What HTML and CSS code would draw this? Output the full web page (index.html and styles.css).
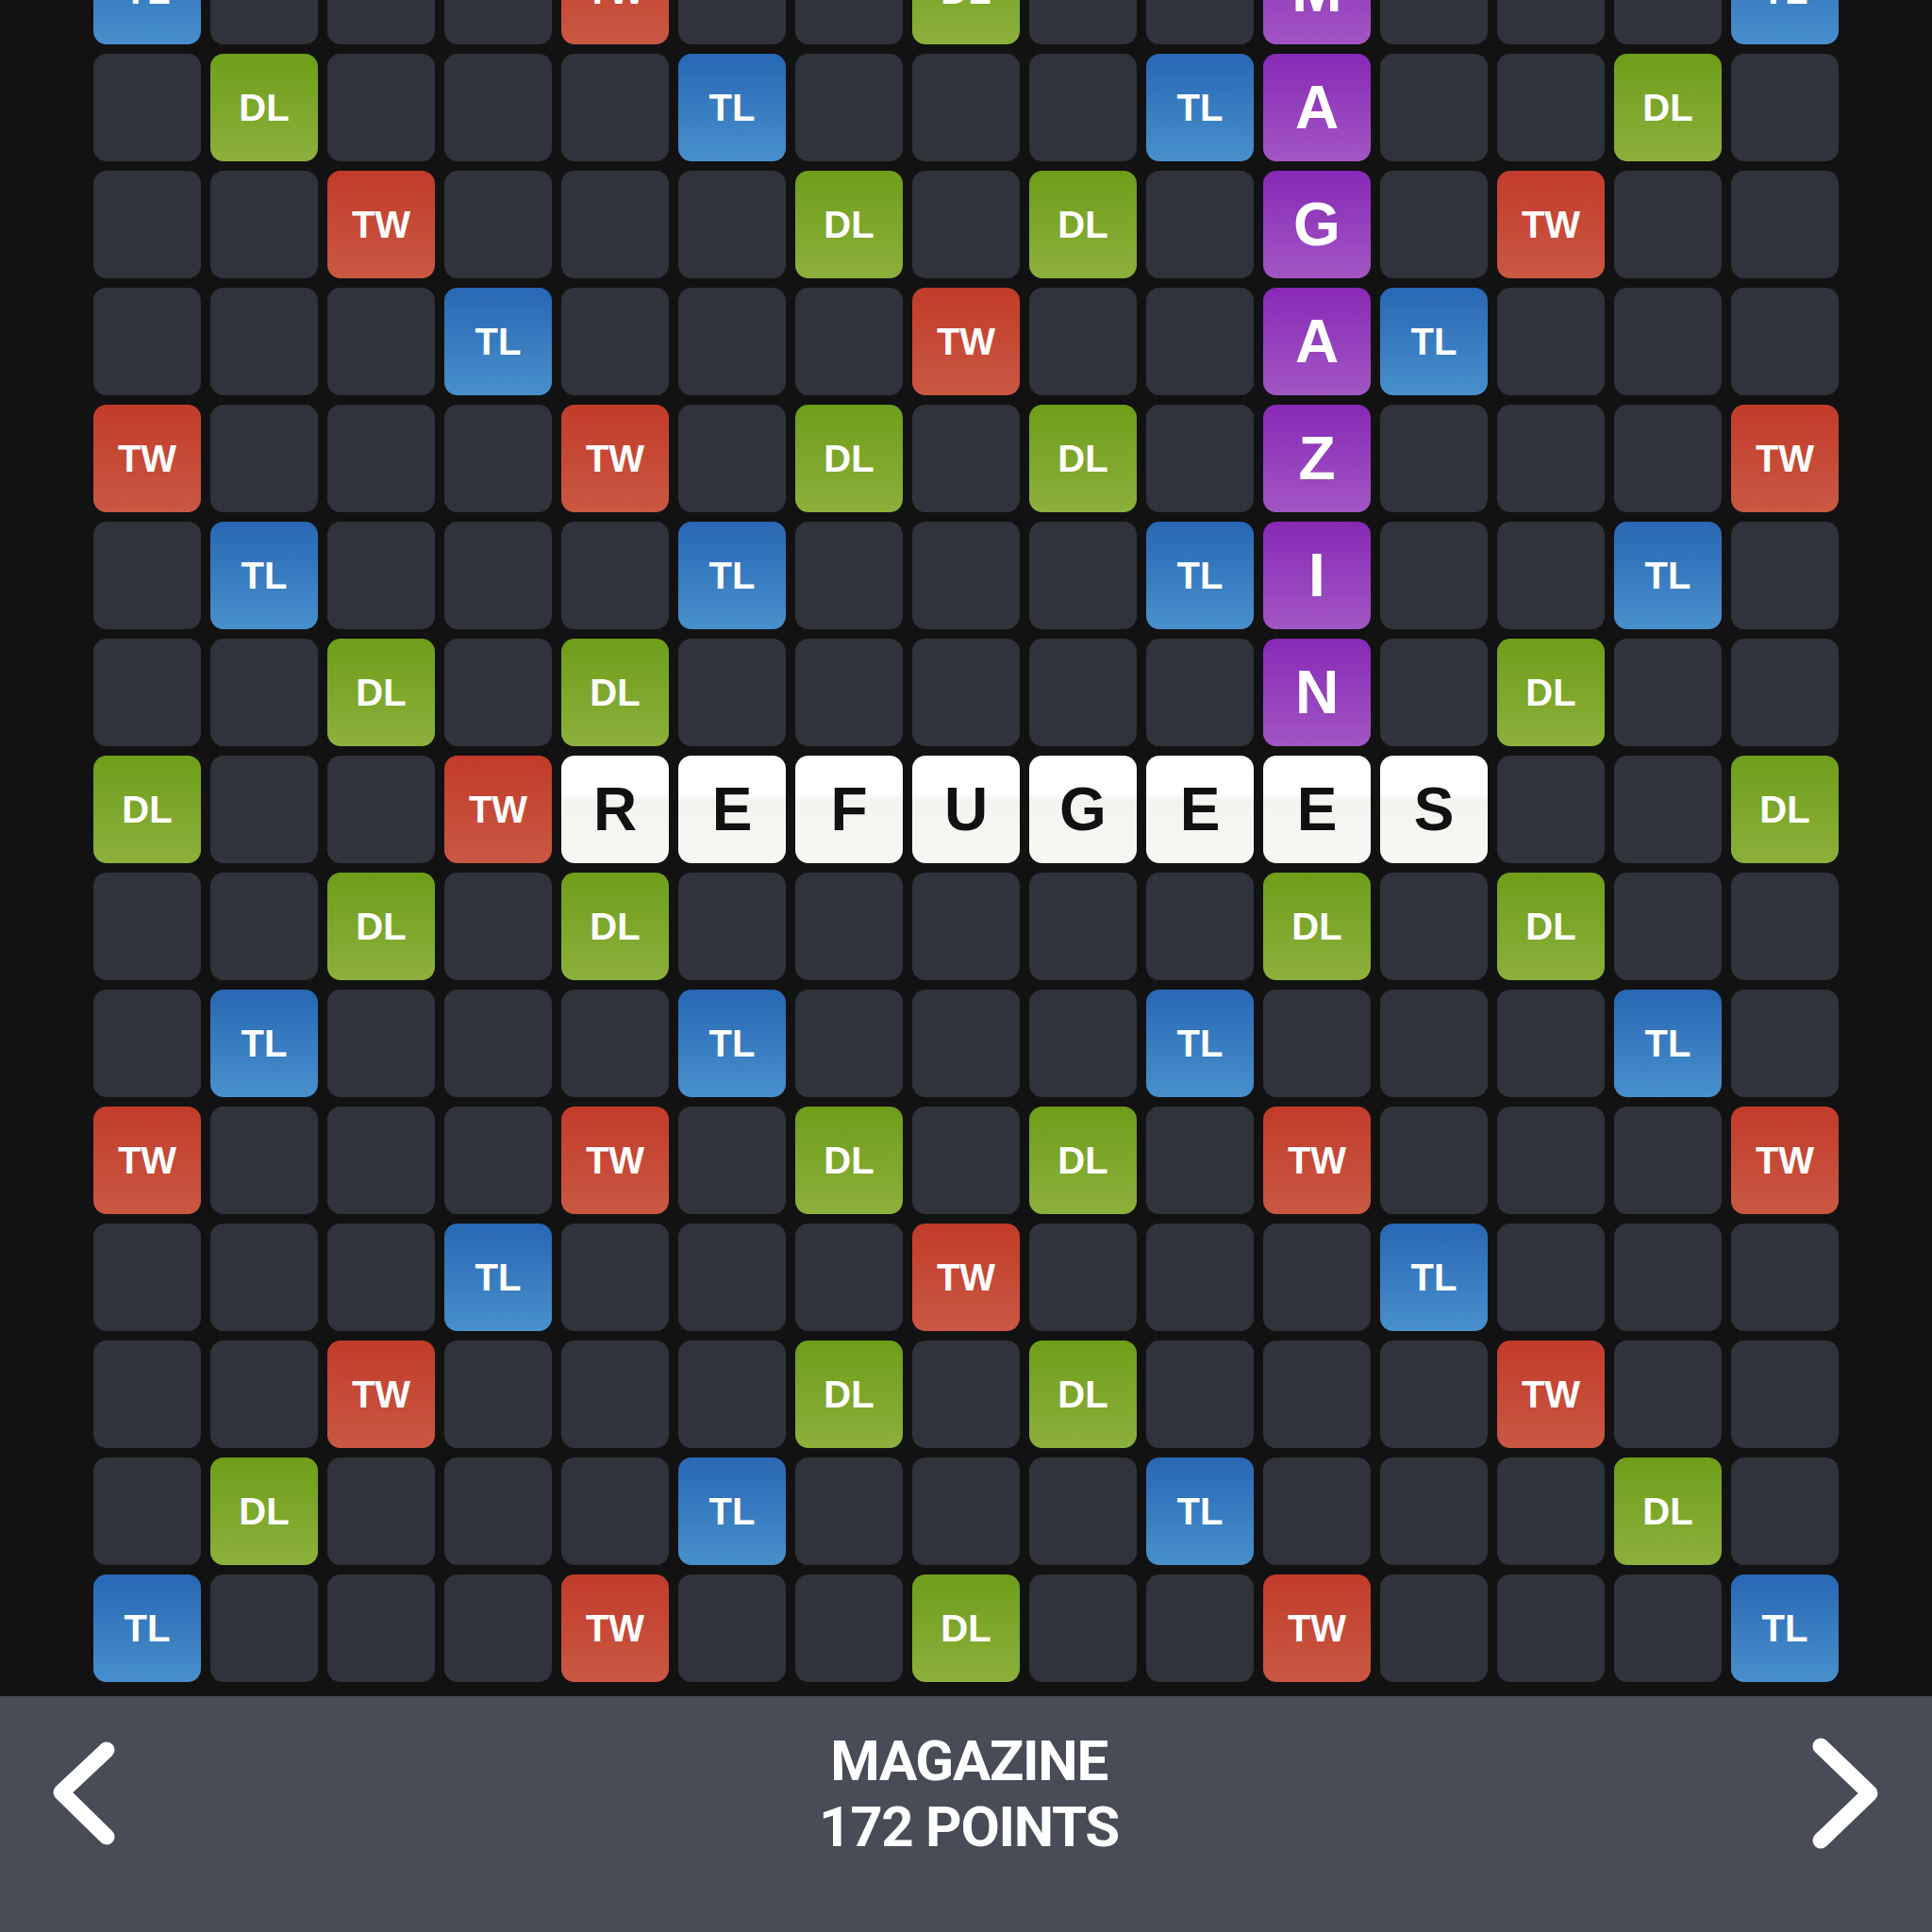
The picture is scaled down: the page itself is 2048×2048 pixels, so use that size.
FILE: index.html
```html
<!DOCTYPE html>
<html>
<head>
<meta charset="utf-8">
<link rel="stylesheet" href="styles.css">
</head>
<body>
<div class="screen">
  <div class="viewport">
    <div class="board">
      <div class="sq tl">TL</div><div class="sq"></div><div class="sq"></div><div class="sq"></div><div class="sq tw">TW</div><div class="sq"></div><div class="sq"></div><div class="sq dl">DL</div><div class="sq"></div><div class="sq"></div><div class="sq pl">M</div><div class="sq"></div><div class="sq"></div><div class="sq"></div><div class="sq tl">TL</div>
      <div class="sq"></div><div class="sq dl">DL</div><div class="sq"></div><div class="sq"></div><div class="sq"></div><div class="sq tl">TL</div><div class="sq"></div><div class="sq"></div><div class="sq"></div><div class="sq tl">TL</div><div class="sq pl">A</div><div class="sq"></div><div class="sq"></div><div class="sq dl">DL</div><div class="sq"></div>
      <div class="sq"></div><div class="sq"></div><div class="sq tw">TW</div><div class="sq"></div><div class="sq"></div><div class="sq"></div><div class="sq dl">DL</div><div class="sq"></div><div class="sq dl">DL</div><div class="sq"></div><div class="sq pl">G</div><div class="sq"></div><div class="sq tw">TW</div><div class="sq"></div><div class="sq"></div>
      <div class="sq"></div><div class="sq"></div><div class="sq"></div><div class="sq tl">TL</div><div class="sq"></div><div class="sq"></div><div class="sq"></div><div class="sq tw">TW</div><div class="sq"></div><div class="sq"></div><div class="sq pl">A</div><div class="sq tl">TL</div><div class="sq"></div><div class="sq"></div><div class="sq"></div>
      <div class="sq tw">TW</div><div class="sq"></div><div class="sq"></div><div class="sq"></div><div class="sq tw">TW</div><div class="sq"></div><div class="sq dl">DL</div><div class="sq"></div><div class="sq dl">DL</div><div class="sq"></div><div class="sq pl">Z</div><div class="sq"></div><div class="sq"></div><div class="sq"></div><div class="sq tw">TW</div>
      <div class="sq"></div><div class="sq tl">TL</div><div class="sq"></div><div class="sq"></div><div class="sq"></div><div class="sq tl">TL</div><div class="sq"></div><div class="sq"></div><div class="sq"></div><div class="sq tl">TL</div><div class="sq pl">I</div><div class="sq"></div><div class="sq"></div><div class="sq tl">TL</div><div class="sq"></div>
      <div class="sq"></div><div class="sq"></div><div class="sq dl">DL</div><div class="sq"></div><div class="sq dl">DL</div><div class="sq"></div><div class="sq"></div><div class="sq"></div><div class="sq"></div><div class="sq"></div><div class="sq pl">N</div><div class="sq"></div><div class="sq dl">DL</div><div class="sq"></div><div class="sq"></div>
      <div class="sq dl">DL</div><div class="sq"></div><div class="sq"></div><div class="sq tw">TW</div><div class="sq wl">R</div><div class="sq wl">E</div><div class="sq wl">F</div><div class="sq wl">U</div><div class="sq wl">G</div><div class="sq wl">E</div><div class="sq wl">E</div><div class="sq wl">S</div><div class="sq"></div><div class="sq"></div><div class="sq dl">DL</div>
      <div class="sq"></div><div class="sq"></div><div class="sq dl">DL</div><div class="sq"></div><div class="sq dl">DL</div><div class="sq"></div><div class="sq"></div><div class="sq"></div><div class="sq"></div><div class="sq"></div><div class="sq dl">DL</div><div class="sq"></div><div class="sq dl">DL</div><div class="sq"></div><div class="sq"></div>
      <div class="sq"></div><div class="sq tl">TL</div><div class="sq"></div><div class="sq"></div><div class="sq"></div><div class="sq tl">TL</div><div class="sq"></div><div class="sq"></div><div class="sq"></div><div class="sq tl">TL</div><div class="sq"></div><div class="sq"></div><div class="sq"></div><div class="sq tl">TL</div><div class="sq"></div>
      <div class="sq tw">TW</div><div class="sq"></div><div class="sq"></div><div class="sq"></div><div class="sq tw">TW</div><div class="sq"></div><div class="sq dl">DL</div><div class="sq"></div><div class="sq dl">DL</div><div class="sq"></div><div class="sq tw">TW</div><div class="sq"></div><div class="sq"></div><div class="sq"></div><div class="sq tw">TW</div>
      <div class="sq"></div><div class="sq"></div><div class="sq"></div><div class="sq tl">TL</div><div class="sq"></div><div class="sq"></div><div class="sq"></div><div class="sq tw">TW</div><div class="sq"></div><div class="sq"></div><div class="sq"></div><div class="sq tl">TL</div><div class="sq"></div><div class="sq"></div><div class="sq"></div>
      <div class="sq"></div><div class="sq"></div><div class="sq tw">TW</div><div class="sq"></div><div class="sq"></div><div class="sq"></div><div class="sq dl">DL</div><div class="sq"></div><div class="sq dl">DL</div><div class="sq"></div><div class="sq"></div><div class="sq"></div><div class="sq tw">TW</div><div class="sq"></div><div class="sq"></div>
      <div class="sq"></div><div class="sq dl">DL</div><div class="sq"></div><div class="sq"></div><div class="sq"></div><div class="sq tl">TL</div><div class="sq"></div><div class="sq"></div><div class="sq"></div><div class="sq tl">TL</div><div class="sq"></div><div class="sq"></div><div class="sq"></div><div class="sq dl">DL</div><div class="sq"></div>
      <div class="sq tl">TL</div><div class="sq"></div><div class="sq"></div><div class="sq"></div><div class="sq tw">TW</div><div class="sq"></div><div class="sq"></div><div class="sq dl">DL</div><div class="sq"></div><div class="sq"></div><div class="sq tw">TW</div><div class="sq"></div><div class="sq"></div><div class="sq"></div><div class="sq tl">TL</div>
    </div>
  </div>
  <div class="bar">
    <div class="bar-row">
      <svg class="nav nav-prev" width="130" height="120" viewBox="0 0 130 120"><polyline points="113,13 65,58 113,105" fill="none" stroke="#ffffff" stroke-width="17" stroke-linecap="round" stroke-linejoin="round"/></svg>
      <div class="result">
        <div class="word">MAGAZINE</div>
        <div class="points">172 POINTS</div>
      </div>
      <svg class="nav nav-next" width="130" height="120" viewBox="0 0 130 120"><polyline points="12,9 64,59 12,109" fill="none" stroke="#ffffff" stroke-width="17" stroke-linecap="round" stroke-linejoin="round"/></svg>
    </div>
  </div>
</div>
</body>
</html>
```

FILE: styles.css
```css
html, body {
  margin: 0;
  padding: 0;
}
body {
  background: #121212;
  width: 2048px;
  height: 2048px;
  overflow: hidden;
  font-family: "Liberation Sans", Arial, sans-serif;
}
.screen {
  width: 2048px;
  height: 2048px;
  display: flex;
  flex-direction: column;
}
.viewport {
  height: 1798px;
  flex: none;
  overflow: hidden;
  background: #121212;
}
.board {
  margin-top: -67px;
  display: grid;
  grid-template-columns: repeat(15, 113.5px);
  grid-auto-rows: 113.5px;
  gap: 10.5px;
  justify-content: center;
}
.sq {
  border-radius: 14px;
  background: #30333b;
  display: flex;
  align-items: center;
  justify-content: center;
  color: #ffffff;
  font-weight: bold;
  font-size: 40px;
  line-height: 1;
}
.dl {
  background: linear-gradient(180deg, #6e9e1a 0%, #8cb03c 100%);
}
.tl {
  background: linear-gradient(180deg, #2867b4 0%, #4890cc 100%);
}
.tw {
  background: linear-gradient(180deg, #c23b2b 0%, #c95842 100%);
}
.pl {
  background: linear-gradient(180deg, #8729b6 0%, #a256c4 100%);
  font-size: 64px;
}
.wl {
  background: linear-gradient(180deg, #ffffff 0%, #ffffff 36%, #f5f3f0 41%, #f9f7f4 100%);
  color: #111111;
  font-size: 64px;
}
.bar {
  flex: 1;
  background: #474c56;
  padding-top: 34px;
  box-sizing: border-box;
}
.bar-row {
  display: flex;
  align-items: center;
  justify-content: space-between;
}
.nav {
  flex: none;
  display: block;
}
.result {
  text-align: center;
  font-family: Roboto, "Liberation Sans", sans-serif;
  font-weight: bold;
  font-size: 60px;
  line-height: 70px;
  letter-spacing: -1.3px;
  color: #ffffff;
  padding-left: 6px;
}
```
